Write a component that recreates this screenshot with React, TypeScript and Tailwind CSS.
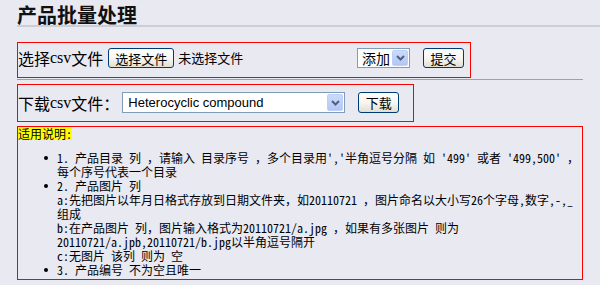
import React from "react";

const CJK = "font-['Noto_Sans_Mono_CJK_SC','Noto_Sans_CJK_SC',monospace]";

function XpButton({ label, w, h }: { label: string; w: string; h: string }) {
  return (
    <div
      className={`${w} ${h} flex items-center justify-center border border-[#003c74] rounded-[3px] bg-linear-to-b from-white via-[#f7f6f1] to-[#e2dfd2] text-[13px] leading-none text-black shrink-0`}
    >
      {label}
    </div>
  );
}

function Arrow() {
  return (
    <div className="w-[16px] h-full flex items-center justify-center rounded-[2px] bg-linear-to-b from-[#cbdafc] to-[#b3c7f4] border border-[#bccff8]">
      <svg width="9" height="6" viewBox="0 0 9 6">
        <path d="M1 1 L4.5 4.5 L8 1" fill="none" stroke="#4d6185" strokeWidth="2" />
      </svg>
    </div>
  );
}

function Bullet({ children }: { children: React.ReactNode }) {
  return (
    <div className="flex">
      <div className="w-[39px] shrink-0 h-[14px] flex items-center">
        <div className="ml-[26px] w-[4px] h-[4px] rounded-full bg-black" />
      </div>
      <div className="flex flex-col">{children}</div>
    </div>
  );
}

function Line({ children }: { children: React.ReactNode }) {
  return <div className="h-[14px] leading-[14px] whitespace-pre">{children}</div>;
}

export default function App() {
  return (
    <div className={`w-[600px] h-[285px] overflow-hidden bg-[#e9e9f2] pl-[17px] text-black ${CJK}`}>
      {/* Title */}
      <div className="pt-[5px] border-b-2 border-[#cdcdd4]">
        <div className="text-[20px] leading-[20px] font-bold text-[#111]">产品批量处理</div>
      </div>

      {/* Box 1 */}
      <div className="mt-[15px] w-[454px] h-[36px] border border-[#ff0000] flex items-start pt-[5px] pr-[6px]">
        <div className="h-[20px] flex items-center text-[16px] leading-[20px] whitespace-nowrap">
          选择<span className="font-['Liberation_Serif',serif]">csv</span>文件
        </div>
        <div className="ml-[5px]">
          <XpButton label="选择文件" w="w-[66px]" h="h-[20px]" />
        </div>
        <div className="ml-[4px] h-[20px] flex items-center text-[13px] whitespace-nowrap">未选择文件</div>
        <div className="ml-auto w-[53px] h-[20px] border border-[#7f9db9] bg-white flex items-stretch p-[1px]">
          <div className="flex-1 flex items-center pl-[3px] text-[14px] leading-none">添加</div>
          <Arrow />
        </div>
        <div className="ml-[13px]">
          <XpButton label="提交" w="w-[41px]" h="h-[20px]" />
        </div>
      </div>

      {/* Separator */}
      <div className="mt-[1px] w-[566px] h-[1px] bg-[#a0a0a8]" />

      {/* Box 2 */}
      <div className="mt-[4px] w-[397px] h-[38px] border border-[#ff0000] flex items-start pt-[7px]">
        <div className="h-[21px] flex items-center text-[16px] leading-[20px] whitespace-nowrap">
          下载<span className="font-['Liberation_Serif',serif]">csv</span>文件：
        </div>
        <div className="ml-[3px] w-[223px] h-[21px] border border-[#7f9db9] bg-white flex items-stretch p-[1px]">
          <div className="flex-1 flex items-center pl-[4px] text-[13px] leading-none font-['Liberation_Sans',sans-serif]">
            Heterocyclic compound
          </div>
          <Arrow />
        </div>
        <div className="ml-[13px]">
          <XpButton label="下载" w="w-[41px]" h="h-[21px]" />
        </div>
      </div>

      {/* Box 3 */}
      <div className="mt-[4px] w-[566px] h-[154px] border border-[#ff0000] text-[12px]">
        <div className="flex">
          <span className="bg-[#ffff00] h-[13px] leading-[13px] whitespace-nowrap">适用说明:</span>
        </div>
        <div className="mt-[11px] flex flex-col">
          <Bullet>
            <Line>1. 产品目录 列 ，请输入 目录序号 ，多个目录用','半角逗号分隔 如 '499' 或者 '499,500' ，</Line>
            <Line>每个序号代表一个目录</Line>
          </Bullet>
          <Bullet>
            <Line>2. 产品图片 列</Line>
            <Line>a:先把图片以年月日格式存放到日期文件夹，如20110721 ，图片命名以大小写26个字母,数字,-,_</Line>
            <Line>组成</Line>
            <Line>b:在产品图片 列，图片输入格式为20110721/a.jpg ，如果有多张图片 则为</Line>
            <Line>20110721/a.jpb,20110721/b.jpg以半角逗号隔开</Line>
            <Line>c:无图片 该列 则为 空</Line>
          </Bullet>
          <Bullet>
            <Line>3. 产品编号 不为空且唯一</Line>
          </Bullet>
        </div>
      </div>
    </div>
  );
}
